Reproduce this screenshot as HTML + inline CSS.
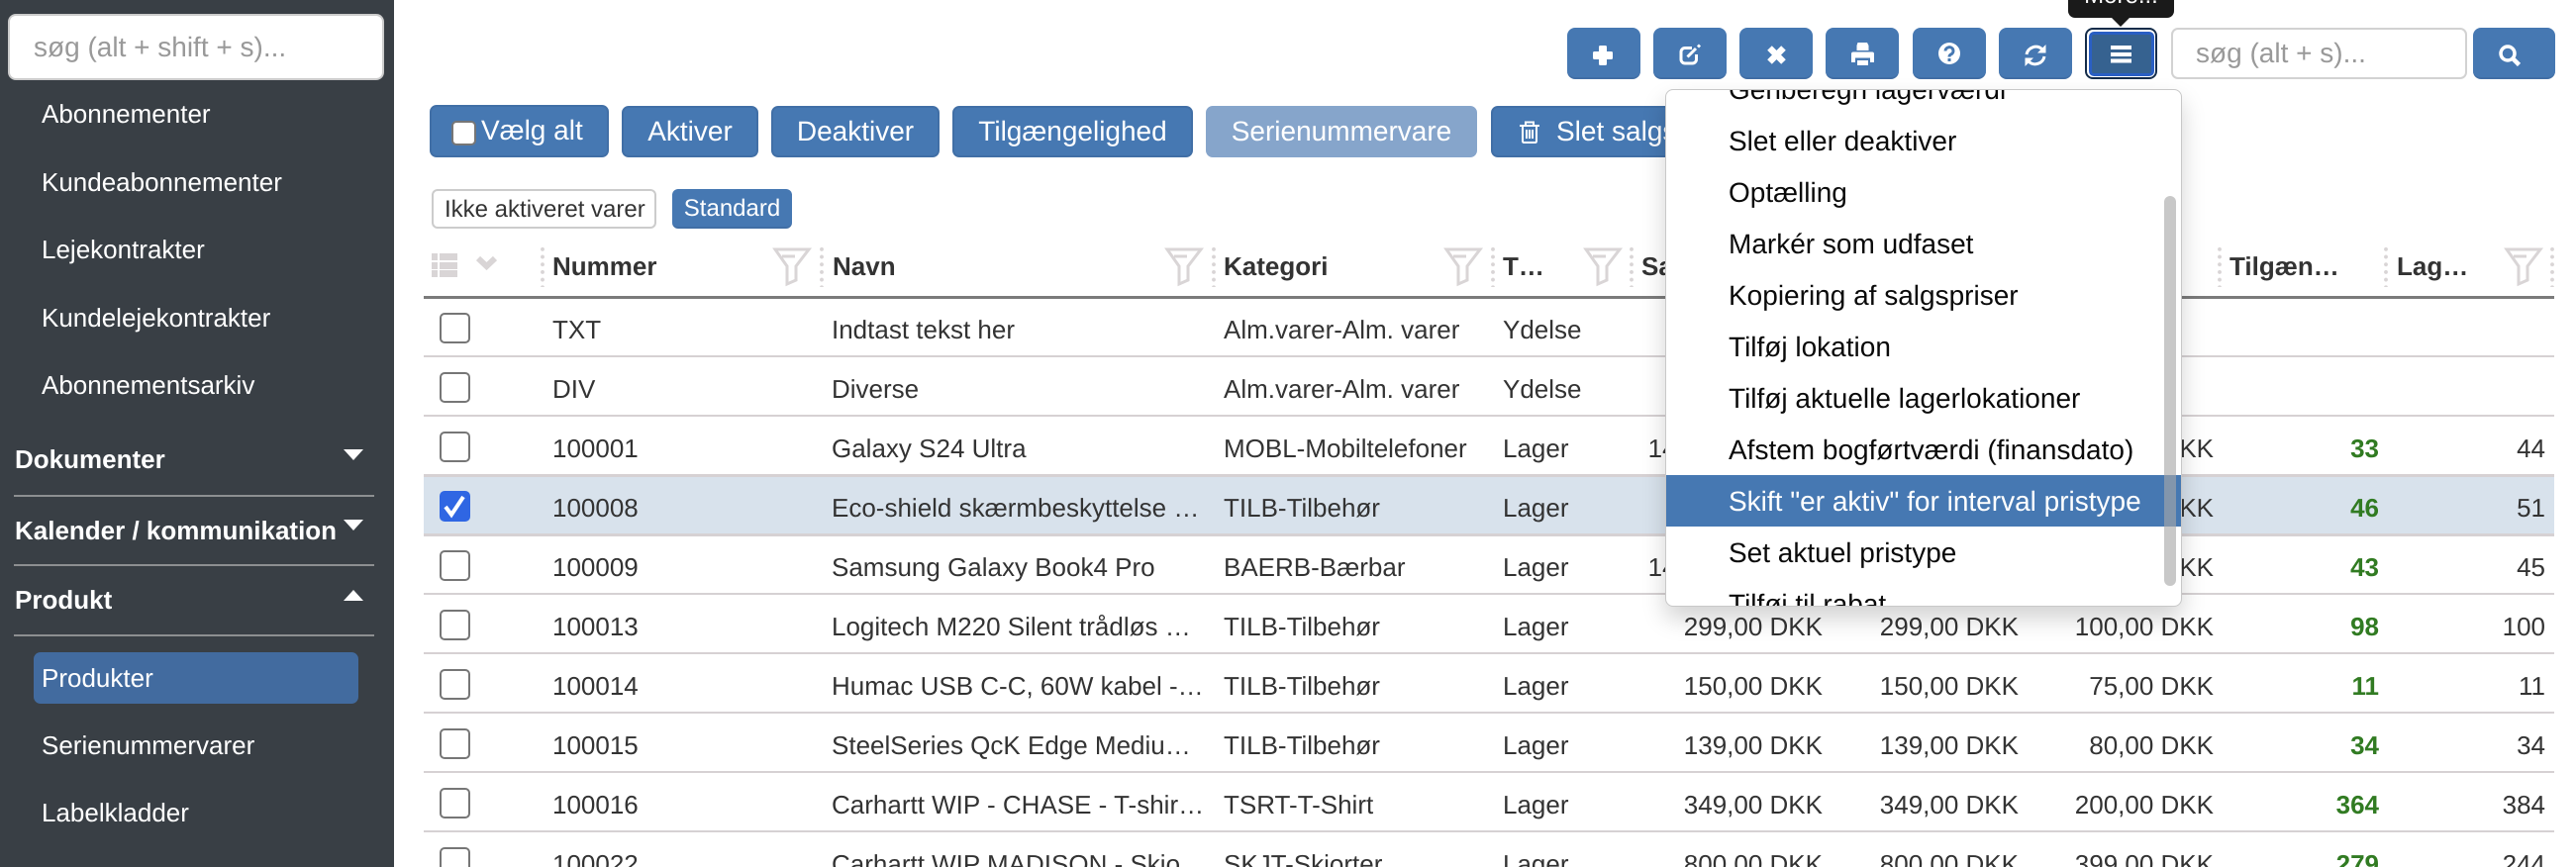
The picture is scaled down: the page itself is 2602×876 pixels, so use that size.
<!DOCTYPE html>
<html lang="da"><head><meta charset="utf-8"><title>Produkter</title>
<style>
*{box-sizing:border-box}
html,body{margin:0;padding:0;width:2602px;height:876px;overflow:hidden;background:#fff}
#w{position:relative;width:2602px;height:876px;overflow:hidden;background:#fff;font-family:"Liberation Sans",Arial,sans-serif;font-size:26px;color:#333;text-rendering:geometricPrecision}
.a,.s,.h,.b,.c,.dd,.dd div,.t,.sep,.fi,.ib svg,.r span,.r i{position:absolute}
.s{left:42px;color:#fff;line-height:60px;white-space:nowrap}
.h{left:15px;color:#fff;font-weight:700;line-height:60px;white-space:nowrap}
.ln{position:absolute;left:14px;width:364px;height:2px;background:#8d8f91}
.tri{position:absolute;left:347px;width:0;height:0;border-left:10px solid transparent;border-right:10px solid transparent}
.b{top:107px;height:52px;background:#4678b2;border:2px solid #416fa6;border-radius:7px;color:#fff;font-size:28px;line-height:48px;text-align:center;white-space:nowrap}
.ib{position:absolute;top:28px;height:52px;background:#4678b2;border-bottom:2px solid #416ea5;border-radius:8px}
.ib svg{overflow:visible}
.r{position:absolute;left:0;width:2602px;height:60px;line-height:60px;white-space:nowrap}
.r span{top:0}
.l{position:absolute;left:428px;width:2152px;height:2px;background:#d6d1d3}
.c{left:444px;top:16px;width:31px;height:31px;border:2px solid #767676;border-radius:5px;background:#fff}
.n{left:558px}.m{left:840px}.k{left:1236px}.y{left:1518px}
.p1{right:761px;font-kerning:none}.p2{right:563px;font-kerning:none}.p3{right:366px;font-kerning:none}.g{right:199px;font-weight:700;color:#317b22}.q{right:31px}
.th{position:absolute;top:239px;line-height:60px;font-weight:700;white-space:nowrap}
.sep{top:248px;width:4px;height:42px;background:radial-gradient(circle,#d9d5d6 1.7px,transparent 2.2px) 0 0/4px 7.7px}
.fi{top:250px;width:38px;height:39px;overflow:visible}
.dd{left:1682px;top:90px;width:522px;height:523px;background:#fff;border:1px solid #c8c8c8;border-radius:8px;box-shadow:0 12px 24px rgba(0,0,0,.175);overflow:hidden;font-size:28px;color:#0a0a0a}
.dd div{left:63px;line-height:60px;white-space:nowrap}
</style></head><body>
<div id="w">

<!-- main table -->
<div class="th" style="left:558px">Nummer</div>
<div class="th" style="left:841px">Navn</div>
<div class="th" style="left:1236px">Kategori</div>
<div class="th" style="left:1518px">T…</div>
<div class="th" style="left:1658px">Salgspris</div>
<div class="th" style="left:2180px">…</div>
<div class="th" style="left:2252px">Tilgæn…</div>
<div class="th" style="left:2421px">Lag…</div>
<div class="sep" style="left:546px"></div><div class="sep" style="left:828px"></div><div class="sep" style="left:1224px"></div><div class="sep" style="left:1506px"></div><div class="sep" style="left:1646px"></div><div class="sep" style="left:2240px"></div><div class="sep" style="left:2408px"></div><div class="sep" style="left:2576px"></div>
<svg class="fi" style="left:781px" viewBox="0 0 38 39"><path d="M2 2H36L23 19V33L14 37V19ZM9 9H22" fill="none" stroke="#d9d5d6" stroke-width="3"/></svg>
<svg class="fi" style="left:1177px" viewBox="0 0 38 39"><path d="M2 2H36L23 19V33L14 37V19ZM9 9H22" fill="none" stroke="#d9d5d6" stroke-width="3"/></svg>
<svg class="fi" style="left:1459px" viewBox="0 0 38 39"><path d="M2 2H36L23 19V33L14 37V19ZM9 9H22" fill="none" stroke="#d9d5d6" stroke-width="3"/></svg>
<svg class="fi" style="left:1600px" viewBox="0 0 38 39"><path d="M2 2H36L23 19V33L14 37V19ZM9 9H22" fill="none" stroke="#d9d5d6" stroke-width="3"/></svg>
<svg class="fi" style="left:2530px" viewBox="0 0 38 39"><path d="M2 2H36L23 19V33L14 37V19ZM9 9H22" fill="none" stroke="#d9d5d6" stroke-width="3"/></svg>
<svg style="position:absolute;left:436px;top:256px" width="68" height="25" viewBox="0 0 68 25"><g fill="#d9d5d6"><rect x="0" y="0" width="6" height="7"/><rect x="8" y="0" width="18" height="7"/><rect x="0" y="9" width="6" height="7"/><rect x="8" y="9" width="18" height="7"/><rect x="0" y="17" width="6" height="7"/><rect x="8" y="17" width="18" height="7"/></g><path d="M47 5L55.500 13L64 5" fill="none" stroke="#d9d5d6" stroke-width="6"/></svg>
<div style="position:absolute;left:428px;top:299px;width:2152px;height:3px;background:#7b7b7b"></div>

<div style="position:absolute;left:428px;top:482px;width:2152px;height:58px;background:#d8e2ec"></div>
<div class="l" style="top:359px"></div><div class="l" style="top:419px"></div><div class="l" style="top:479px;height:3px"></div><div class="l" style="top:539px;height:3px"></div><div class="l" style="top:599px"></div><div class="l" style="top:659px"></div><div class="l" style="top:719px"></div><div class="l" style="top:779px"></div><div class="l" style="top:839px"></div>

<div class="r" style="top:303px"><i class="c" style="top:13px"></i><span class="n">TXT</span><span class="m">Indtast tekst her</span><span class="k">Alm.varer-Alm. varer</span><span class="y">Ydelse</span></div>
<div class="r" style="top:363px"><i class="c" style="top:13px"></i><span class="n">DIV</span><span class="m">Diverse</span><span class="k">Alm.varer-Alm. varer</span><span class="y">Ydelse</span></div>
<div class="r" style="top:423px"><i class="c" style="top:13px"></i><span class="n">100001</span><span class="m">Galaxy S24 Ultra</span><span class="k">MOBL-Mobiltelefoner</span><span class="y">Lager</span><span class="p1">14.999,00 DKK</span><span class="p2">14.999,00 DKK</span><span class="p3">9.999,00 DKK</span><span class="g">33</span><span class="q">44</span></div>
<div class="r" style="top:483px"><svg style="position:absolute;left:444px;top:13px" width="31" height="31" viewBox="0 0 31 31"><rect width="31" height="31" rx="5" fill="#2f66e3"/><path d="M6 16L12 24L24 6" fill="none" stroke="#fff" stroke-width="4"/></svg><span class="n">100008</span><span class="m">Eco-shield skærmbeskyttelse …</span><span class="k">TILB-Tilbehør</span><span class="y">Lager</span><span class="p3">50,00 DKK</span><span class="g">46</span><span class="q">51</span></div>
<div class="r" style="top:543px"><i class="c" style="top:13px"></i><span class="n">100009</span><span class="m">Samsung Galaxy Book4 Pro</span><span class="k">BAERB-Bærbar</span><span class="y">Lager</span><span class="p1">14.499,00 DKK</span><span class="p3">9.999,00 DKK</span><span class="g">43</span><span class="q">45</span></div>
<div class="r" style="top:603px"><i class="c" style="top:13px"></i><span class="n">100013</span><span class="m">Logitech M220 Silent trådløs …</span><span class="k">TILB-Tilbehør</span><span class="y">Lager</span><span class="p1">299,00 DKK</span><span class="p2">299,00 DKK</span><span class="p3">100,00 DKK</span><span class="g">98</span><span class="q">100</span></div>
<div class="r" style="top:663px"><i class="c" style="top:13px"></i><span class="n">100014</span><span class="m">Humac USB C-C, 60W kabel -…</span><span class="k">TILB-Tilbehør</span><span class="y">Lager</span><span class="p1">150,00 DKK</span><span class="p2">150,00 DKK</span><span class="p3">75,00 DKK</span><span class="g">11</span><span class="q">11</span></div>
<div class="r" style="top:723px"><i class="c" style="top:13px"></i><span class="n">100015</span><span class="m">SteelSeries QcK Edge Mediu…</span><span class="k">TILB-Tilbehør</span><span class="y">Lager</span><span class="p1">139,00 DKK</span><span class="p2">139,00 DKK</span><span class="p3">80,00 DKK</span><span class="g">34</span><span class="q">34</span></div>
<div class="r" style="top:783px"><i class="c" style="top:13px"></i><span class="n">100016</span><span class="m">Carhartt WIP - CHASE - T-shir…</span><span class="k">TSRT-T-Shirt</span><span class="y">Lager</span><span class="p1">349,00 DKK</span><span class="p2">349,00 DKK</span><span class="p3">200,00 DKK</span><span class="g">364</span><span class="q">384</span></div>
<div class="r" style="top:843px"><i class="c" style="top:13px"></i><span class="n">100022</span><span class="m">Carhartt WIP MADISON - Skjo…</span><span class="k">SKJT-Skjorter</span><span class="y">Lager</span><span class="p1">800,00 DKK</span><span class="p2">800,00 DKK</span><span class="p3">399,00 DKK</span><span class="g">279</span><span class="q">244</span></div>

<!-- action buttons -->
<div class="b" style="left:434px;top:106px;width:181px;height:53px;text-align:left;padding-left:50px"><i style="position:absolute;left:20px;top:14px;width:25px;height:25px;background:#fff;border:2px solid #767676;border-radius:5px"></i>Vælg alt</div>
<div class="b" style="left:628px;width:138px">Aktiver</div>
<div class="b" style="left:779px;width:170px">Deaktiver</div>
<div class="b" style="left:962px;width:243px">Tilgængelighed</div>
<div class="b" style="left:1218px;width:274px;background:#86a5cb;border-color:#86a5cb">Serienummervare</div>
<div class="b" style="left:1506px;width:260px;text-align:left;padding-left:64px"><svg style="position:absolute;left:27px;top:13px" width="20" height="23" viewBox="0 0 20 23" fill="none" stroke="#fff" stroke-width="2"><path d="M0 5H20M6 5V1.500H14V5M3 5V20.500Q3 22 4.500 22H15.500Q17 22 17 20.500V5M7 9V18M10 9V18M13 9V18"/></svg>Slet salgspriser</div>

<!-- filters -->
<div style="position:absolute;left:436px;top:191px;width:227px;height:40px;border:2px solid #ccc;border-radius:6px;background:#fff;font-size:24px;line-height:38px;padding-left:11px;white-space:nowrap">Ikke aktiveret varer</div>
<div style="position:absolute;left:679px;top:191px;width:121px;height:40px;border-radius:6px;background:#4678b2;border-bottom:2px solid #416ea5;color:#fff;font-size:24px;line-height:40px;text-align:center">Standard</div>

<!-- top toolbar -->
<div class="ib" style="left:1583px;width:74px"><svg style="left:26px;top:18px" width="20" height="20" viewBox="0 0 20 20" fill="#fff"><rect x="0" y="6" width="20" height="8" rx="1.500"/><rect x="6" y="0" width="8" height="20" rx="1.500"/></svg></div>
<div class="ib" style="left:1670px;width:74px"><svg style="left:26px;top:17px" width="22" height="21" viewBox="0 0 22 21" fill="none" stroke="#fff"><path d="M13 3.500H6a4 4 0 0 0-4 4v7.500a4 4 0 0 0 4 4h7.500a4 4 0 0 0 4-4V10" stroke-width="3"/><path d="M8.500 12.500L17 4" stroke-width="3"/><path d="M19 2.500L21 .5" stroke-width="3"/></svg></div>
<div class="ib" style="left:1757px;width:74px"><svg style="left:28px;top:18px" width="19" height="19" viewBox="0 0 19 19" fill="none" stroke="#fff" stroke-width="6.500"><path d="M2.500 2.500L16.500 16.500M16.500 2.500L2.500 16.500"/></svg></div>
<div class="ib" style="left:1844px;width:74px"><svg style="left:26px;top:15px" width="23" height="23" viewBox="0 0 23 23" fill="#fff"><path d="M6.500 0H16L17.500 3V8H5.500V3Z"/><path d="M2 9.500H21A2 2 0 0 1 23 11.500V20H19V15.500H4V20H0V11.500A2 2 0 0 1 2 9.500Z"/><rect x="6" y="18" width="11" height="5"/></svg></div>
<div class="ib" style="left:1932px;width:74px"><svg style="left:26px;top:15px" width="22" height="22" viewBox="0 0 22 22"><circle cx="11" cy="11" r="11" fill="#fff"/><path d="M7 8.500A4 3.800 0 1 1 12.500 12C11.200 12.800 11 13.200 11 14.500" fill="none" stroke="#4678b2" stroke-width="3"/><rect x="9.500" y="16" width="3" height="3" fill="#4678b2"/></svg></div>
<div class="ib" style="left:2019px;width:74px"><svg style="left:26px;top:17px" width="22" height="22" viewBox="0 0 22 22"><path d="M2 10A9.500 9.500 0 0 1 17.500 4.500M20 12A9.500 9.500 0 0 1 4.500 17.500" fill="none" stroke="#fff" stroke-width="3"/><path d="M21.500 0V8.500H13ZM.5 22V13.500H9Z" fill="#fff"/></svg></div>
<div style="position:absolute;left:2106px;top:28px;width:73px;height:52px;border:2.500px solid #142c4a;border-radius:8px;background:#fff;padding:1.500px"><div style="width:100%;height:100%;border:3px solid #2a5fc4;border-radius:5px;background:#366290"></div></div>
<svg style="position:absolute;left:2132px;top:45px" width="22" height="19" viewBox="0 0 22 19" fill="#fff"><rect y="1" width="21" height="4"/><rect y="8" width="21" height="4"/><rect y="14.500" width="21" height="4"/></svg>
<div style="position:absolute;left:2089px;top:-4px;width:107px;height:22px;background:#1a1a1a;border-radius:0 0 7px 7px;overflow:hidden;color:#fff;font-size:24px;text-align:center;line-height:60px"><div style="position:absolute;left:0;right:0;top:-30px">More...</div></div>
<div style="position:absolute;left:2133px;top:18px;width:0;height:0;border-left:9px solid transparent;border-right:9px solid transparent;border-top:9px solid #1a1a1a"></div>
<div style="position:absolute;left:2193px;top:28px;width:299px;height:52px;border:2px solid #d2d2d2;border-radius:7px;background:#fff;font-size:28px;color:#999;line-height:60px;white-space:nowrap"><div style="position:absolute;left:23px;top:-6px">søg (alt + s)...</div></div>
<div class="ib" style="left:2498px;width:83px"><svg style="left:26px;top:17px" width="22" height="22" viewBox="0 0 22 22" fill="none" stroke="#fff"><circle cx="9" cy="9" r="7" stroke-width="3.500"/><path d="M14 14L20.500 20.500" stroke-width="4.500"/></svg></div>

<!-- dropdown -->
<div class="dd">
<div style="top:-30px">Genberegn lagerværdi</div>
<div style="top:22px">Slet eller deaktiver</div>
<div style="top:74px">Optælling</div>
<div style="top:126px">Markér som udfaset</div>
<div style="top:178px">Kopiering af salgspriser</div>
<div style="top:230px">Tilføj lokation</div>
<div style="top:282px">Tilføj aktuelle lagerlokationer</div>
<div style="top:334px">Afstem bogførtværdi (finansdato)</div>
<div style="top:389px;left:0;right:0;height:52px;background:#4678b2"></div>
<div style="top:386px;color:#fff">Skift "er aktiv" for interval pristype</div>
<div style="top:438px">Set aktuel pristype</div>
<div style="top:490px">Tilføj til rabat</div>
<div style="left:503px;top:107px;width:12px;height:394px;border-radius:6px;background:rgba(168,168,168,.63)"></div>
</div>

<!-- sidebar -->
<div style="position:absolute;left:0;top:0;width:398px;height:876px;background:#393f45">
<div style="position:absolute;left:8px;top:14px;width:380px;height:67px;background:#fff;border:2px solid #ccc;border-radius:8px;font-size:28px;color:#999;white-space:nowrap"><div style="position:absolute;left:24px;top:2px;line-height:60px">søg (alt + shift + s)...</div></div>
<div class="s" style="top:85px">Abonnementer</div>
<div class="s" style="top:154px">Kundeabonnementer</div>
<div class="s" style="top:222px">Lejekontrakter</div>
<div class="s" style="top:291px">Kundelejekontrakter</div>
<div class="s" style="top:359px">Abonnementsarkiv</div>
<div class="h" style="top:434px">Dokumenter</div><div class="tri" style="top:454px;border-top:11px solid #fff"></div><div class="ln" style="top:500px"></div>
<div class="h" style="top:506px">Kalender / kommunikation</div><div class="tri" style="top:525px;border-top:11px solid #fff"></div><div class="ln" style="top:570px"></div>
<div class="h" style="top:576px">Produkt</div><div class="tri" style="top:596px;border-bottom:11px solid #fff"></div><div class="ln" style="top:641px"></div>
<div style="position:absolute;left:34px;top:659px;width:328px;height:52px;border-radius:7px;background:#426b9f"></div>
<div class="s" style="top:655px">Produkter</div>
<div class="s" style="top:723px">Serienummervarer</div>
<div class="s" style="top:791px">Labelkladder</div>
</div>
</div>
</body></html>
